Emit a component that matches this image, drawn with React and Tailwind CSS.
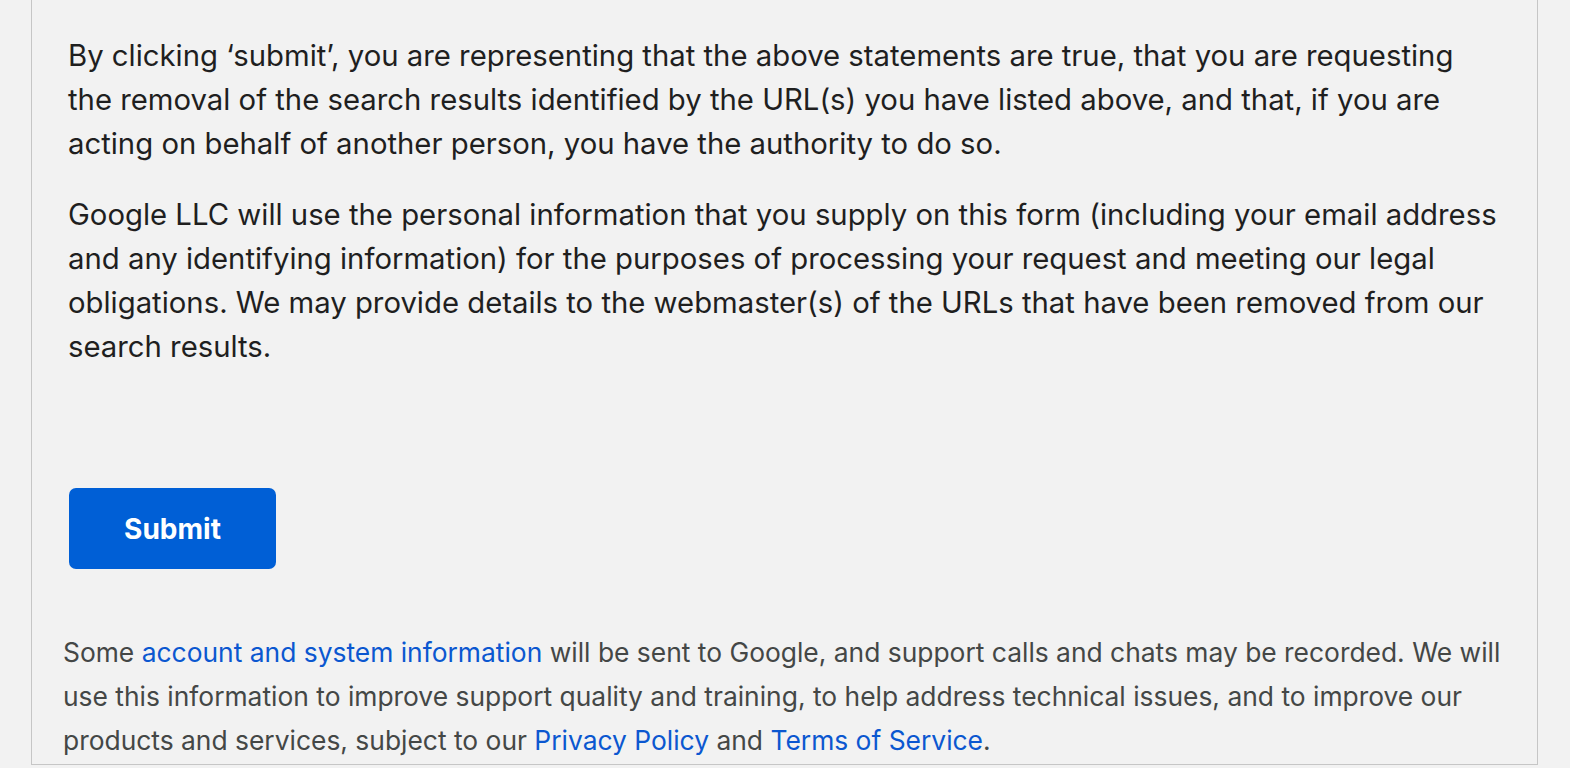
export default function App() {
  return (
    <div className="w-[1570px] h-[768px] overflow-hidden bg-[#f2f2f2]" style={{ fontFamily: 'Inter, "Noto Sans", sans-serif' }}>
      <div className="ml-[31px] w-[1507px] h-[765px] border-x border-b border-[#c6c6c6] flex flex-col">
        <div className="pl-[36px] pt-[34px] text-[29.3px] leading-[44px] text-[#1f1f1f] whitespace-nowrap">
          <p>
            By clicking ‘submit’, you are representing that the above statements are true, that you are requesting<br />
            the removal of the search results identified by the URL(s) you have listed above, and that, if you are<br />
            acting on behalf of another person, you have the authority to do so.
          </p>
          <p className="mt-[27px]">
            Google LLC will use the personal information that you supply on this form (including your email address<br />
            and any identifying information) for the purposes of processing your request and meeting our legal<br />
            obligations. We may provide details to the webmaster(s) of the URLs that have been removed from our<br />
            search results.
          </p>
        </div>
        <div className="pl-[37px] mt-[119px]">
          <button className="w-[207px] h-[81px] rounded-[7px] bg-[#005fd6] text-white text-[28px] font-bold">
            Submit
          </button>
        </div>
        <div className="pl-[31px] mt-[61px] text-[26.4px] leading-[44px] text-[#444746] whitespace-nowrap">
          <p>
            Some <span className="text-[#0b57d0]">account and system information</span> will be sent to Google, and support calls and chats may be recorded. We will<br />
            use this information to improve support quality and training, to help address technical issues, and to improve our<br />
            products and services, subject to our <span className="text-[#0b57d0]">Privacy Policy</span> and <span className="text-[#0b57d0]">Terms of Service</span>.
          </p>
        </div>
      </div>
    </div>
  );
}
